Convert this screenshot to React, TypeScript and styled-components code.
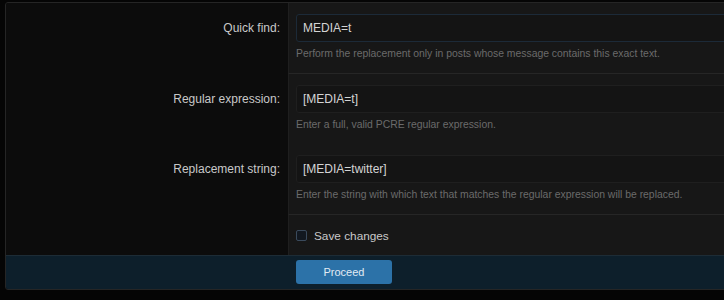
import React from "react";
import styled, { createGlobalStyle } from "styled-components";

const GlobalStyle = createGlobalStyle`
  html, body {
    margin: 0;
    padding: 0;
    background: #050505;
    overflow: hidden;
  }
  body {
    font-family: "Liberation Sans", Arial, sans-serif;
  }
`;

const Page = styled.div`
  padding: 2px 0 0 5px;
  height: 300px;
  box-sizing: border-box;
`;

const Card = styled.form`
  width: 740px;
  border: 1px solid #252525;
  border-radius: 3px;
  overflow: hidden;
  background: #0c0c0c;
`;

const Row = styled.div`
  display: grid;
  grid-template-columns: 282px 1fr;
`;

const Label = styled.label`
  display: flex;
  justify-content: flex-end;
  align-items: flex-start;
  padding: 11px 8px 0 0;
  height: 28px;
  line-height: 28px;
  font-size: 12px;
  color: #c9c9c9;
  background: #0c0c0c;
`;

const Cell = styled.div<{ $divided?: boolean; $tight?: boolean }>`
  background: #171717;
  border-left: 1px solid #1f1f1f;
  padding: ${(p) => (p.$tight ? "11px 0 10px 7px" : "11px 0 12px 7px")};
  border-bottom: ${(p) => (p.$divided ? "1px solid #262626" : "none")};
`;

const Input = styled.input<{ $focused?: boolean }>`
  display: block;
  box-sizing: border-box;
  width: 100%;
  height: 28px;
  padding: 0 6px;
  font-family: "Liberation Sans", Arial, sans-serif;
  font-size: 12px;
  color: #d4d4d4;
  background: #141414;
  border: 1px solid ${(p) => (p.$focused ? "#1c2a38" : "#1f1f1f")};
  border-radius: 3px;
  outline: none;
`;

const Hint = styled.div`
  margin-top: 5px;
  font-size: 10.4px;
  line-height: 14px;
  color: #6b6b6b;
`;

const Check = styled.label`
  display: flex;
  align-items: center;
  gap: 7px;
  height: 19px;
  font-size: 11.8px;
  color: #c9c9c9;
`;

const Box = styled.span`
  width: 9px;
  height: 9px;
  border: 1px solid #3a4a5c;
  border-radius: 2px;
  background: #121820;
`;

const Footer = styled.div`
  display: grid;
  grid-template-columns: 282px 1fr;
  background: #0d1f2b;
  border-top: 1px solid #1d2c36;
  padding: 4px 0 5px;
`;

const Button = styled.button`
  margin-left: 8px;
  width: 96px;
  height: 24px;
  border: none;
  border-radius: 3px;
  background: #2c72a8;
  color: #e2ebf3;
  font-family: "Liberation Sans", Arial, sans-serif;
  font-size: 11px;
`;

type FieldProps = {
  label: string;
  value: string;
  hint: string;
  focused?: boolean;
  divided?: boolean;
};

const Field = ({ label, value, hint, focused, divided }: FieldProps) => (
  <Row>
    <Label>{label}</Label>
    <Cell $divided={divided}>
      <Input $focused={focused} defaultValue={value} />
      <Hint>{hint}</Hint>
    </Cell>
  </Row>
);

export default function App() {
  return (
    <Page>
      <GlobalStyle />
      <Card onSubmit={(e) => e.preventDefault()}>
        <Field
          label="Quick find:"
          value="MEDIA=t"
          hint="Perform the replacement only in posts whose message contains this exact text."
          focused
          divided
        />
        <Field
          label="Regular expression:"
          value="[MEDIA=t]"
          hint="Enter a full, valid PCRE regular expression."
        />
        <Field
          label="Replacement string:"
          value="[MEDIA=twitter]"
          hint="Enter the string with which text that matches the regular expression will be replaced."
          divided
        />
        <Row>
          <Label />
          <Cell $tight>
            <Check>
              <Box />
              Save changes
            </Check>
          </Cell>
        </Row>
        <Footer>
          <span />
          <div>
            <Button type="submit">Proceed</Button>
          </div>
        </Footer>
      </Card>
    </Page>
  );
}
